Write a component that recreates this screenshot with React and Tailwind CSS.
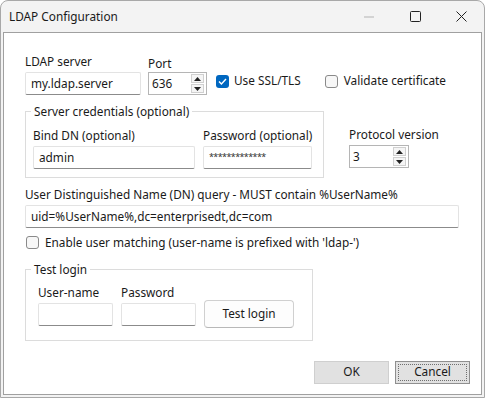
import React from "react";

const font = { fontFamily: '"Noto Sans", "Segoe UI", sans-serif' };

function TextBox({ w, value, className = "" }) {
  return (
    <div
      className={`h-[23px] border border-[#e3e3e3] border-b-[#8b8b8b] bg-white flex items-center pl-[5px] text-[11.8px] text-[#1a1a1a] rounded-[2px] ${className}`}
      style={{ width: w }}
    >
      {value}
    </div>
  );
}

function Spin({ w, value }) {
  return (
    <div
      className="h-[23px] border border-[#b5b5b5] bg-white flex items-center text-[11.8px] text-[#1a1a1a]"
      style={{ width: w }}
    >
      <span className="flex-1 pl-[3px]">{value}</span>
      <div className="flex flex-col w-[13px] mr-[2px] gap-[1px]">
        <div className="h-[9px] border border-[#d0d0d0] bg-[#f5f5f5] flex items-center justify-center">
          <svg width="7" height="4" viewBox="0 0 7 4"><path d="M3.5 0 L7 4 L0 4 Z" fill="#222" /></svg>
        </div>
        <div className="h-[9px] border border-[#d0d0d0] bg-[#f5f5f5] flex items-center justify-center">
          <svg width="7" height="4" viewBox="0 0 7 4"><path d="M0 0 L7 0 L3.5 4 Z" fill="#222" /></svg>
        </div>
      </div>
    </div>
  );
}

function Check({ checked }) {
  return checked ? (
    <div className="w-[13px] h-[13px] rounded-[3px] bg-[#0067c0] flex items-center justify-center">
      <svg width="9" height="7" viewBox="0 0 9 7"><path d="M1 3.5 L3.4 6 L8 1" stroke="white" strokeWidth="1.4" fill="none" /></svg>
    </div>
  ) : (
    <div className="w-[13px] h-[13px] rounded-[3px] border border-[#8a8a8a] bg-[#f7f7f7]" />
  );
}

function Label({ children, className = "" }) {
  return <div className={`text-[11.8px] leading-[16px] text-[#1a1a1a] whitespace-nowrap ${className}`}>{children}</div>;
}

export default function App() {
  return (
    <div className="w-[485px] h-[398px] bg-white" style={font}>
      <div className="w-full h-full flex flex-col border border-[#a8a8a8] rounded-t-[8px] bg-[#f3f3f3] overflow-hidden">
        {/* Title bar */}
        <div className="h-[31px] flex items-center shrink-0">
          <span className="ml-[8px] text-[11.8px] text-[#1a1a1a]">LDAP Configuration</span>
          <div className="flex-1" />
          <div className="w-[46px] flex justify-center">
            <svg width="10" height="2"><rect width="10" height="1" y="0.5" fill="#b4b4b4" /></svg>
          </div>
          <div className="w-[46px] flex justify-center">
            <svg width="11" height="11"><rect x="0.5" y="0.5" width="10" height="10" rx="1" fill="none" stroke="#222" /></svg>
          </div>
          <div className="w-[46px] flex justify-center">
            <svg width="11" height="11"><path d="M0.5 0.5 L10.5 10.5 M10.5 0.5 L0.5 10.5" stroke="#222" strokeWidth="1" /></svg>
          </div>
        </div>
        {/* Client */}
        <div className="flex-1 mx-[2px] mb-[2px] bg-white border border-[#a0a0a0] pl-[21px] pt-[20px] flex flex-col">
          {/* Row 1 */}
          <div className="flex items-end">
            <div className="flex flex-col w-[116px]">
              <Label>LDAP server</Label>
              <TextBox w={116} value="my.ldap.server" className="mt-[3px]" />
            </div>
            <div className="flex flex-col ml-[7px]">
              <Label>Port</Label>
              <div className="mt-[1px]"><Spin w={59} value="636" /></div>
            </div>
            <div className="flex items-center ml-[9px] mb-[5px]">
              <Check checked />
              <span className="ml-[5px] text-[11.8px] text-[#1a1a1a]">Use SSL/TLS</span>
            </div>
            <div className="flex items-center ml-[24px] mb-[5px]">
              <Check />
              <span className="ml-[6px] text-[11.8px] text-[#1a1a1a]">Validate certificate</span>
            </div>
          </div>
          {/* Row 2 */}
          <div className="flex items-start mt-[16px]">
            <div className="relative w-[299px] h-[67px] border border-[#dcdcdc] pl-[7px] pt-[15px]">
              <div className="absolute left-[5px] top-[-9px] bg-white px-[3px] text-[11.8px] leading-[16px] text-[#1a1a1a]">Server credentials (optional)</div>
              <div className="flex">
                <div className="flex flex-col">
                  <Label>Bind DN (optional)</Label>
                  <TextBox w={162} value="admin" className="mt-[3px]" />
                </div>
                <div className="flex flex-col ml-[8px]">
                  <Label>Password (optional)</Label>
                  <TextBox w={109} value={<span className="text-[9px] tracking-[-0.6px] text-[#333] -mt-[2px]">*************</span>} className="mt-[3px]" />
                </div>
              </div>
            </div>
            <div className="flex flex-col ml-[25px] pt-[15px]">
              <Label>Protocol version</Label>
              <div className="mt-[3px]"><Spin w={60} value="3" /></div>
            </div>
          </div>
          {/* DN */}
          <Label className="mt-[8px]">User Distinguished Name (DN) query - MUST contain %UserName%</Label>
          <TextBox w={434} value="uid=%UserName%,dc=enterprisedt,dc=com" className="mt-[3px]" />
          <div className="flex items-center mt-[6px] ml-[1px]">
            <Check />
            <span className="ml-[6px] text-[11.8px] text-[#1a1a1a]">Enable user matching (user-name is prefixed with 'ldap-')</span>
          </div>
          {/* Test login */}
          <div className="relative w-[288px] h-[72px] border border-[#dcdcdc] mt-[17px] pl-[12px] pt-[14px]">
            <div className="absolute left-[5px] top-[-9px] bg-white px-[3px] text-[11.8px] leading-[16px] text-[#1a1a1a]">Test login</div>
            <div className="flex items-end">
              <div className="flex flex-col">
                <Label>User-name</Label>
                <TextBox w={75} value="" className="mt-[3px]" />
              </div>
              <div className="flex flex-col ml-[8px]">
                <Label>Password</Label>
                <TextBox w={75} value="" className="mt-[3px]" />
              </div>
              <div className="ml-[8px] mb-[-2px] w-[90px] h-[28px] rounded-[4px] border border-[#d0d0d0] border-b-[#b8b8b8] bg-[#fdfdfd] flex items-center justify-center text-[11.8px] text-[#1a1a1a]">
                Test login
              </div>
            </div>
          </div>
          {/* Buttons */}
          <div className="flex justify-end mt-[20px] mr-[11px] gap-[6px]">
            <div className="w-[75px] h-[23px] bg-[#e1e1e1] border border-[#cfcfcf] flex items-center justify-center text-[11.8px] text-[#1a1a1a]">OK</div>
            <div className="w-[75px] h-[23px] bg-[#e1e1e1] border border-[#8f8f8f] p-[2px]">
              <div className="w-full h-full border border-dotted border-[#707070] flex items-center justify-center text-[11.8px] text-[#1a1a1a]">Cancel</div>
            </div>
          </div>
        </div>
      </div>
    </div>
  );
}
